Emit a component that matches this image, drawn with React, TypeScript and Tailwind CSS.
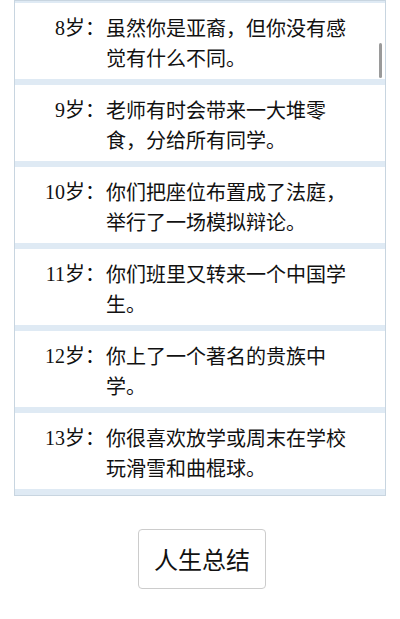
import React from 'react';

interface Entry {
  age: number;
  text: string;
}

const entries: Entry[] = [
  { age: 8, text: '虽然你是亚裔，但你没有感觉有什么不同。' },
  { age: 9, text: '老师有时会带来一大堆零食，分给所有同学。' },
  { age: 10, text: '你们把座位布置成了法庭，举行了一场模拟辩论。' },
  { age: 11, text: '你们班里又转来一个中国学生。' },
  { age: 12, text: '你上了一个著名的贵族中学。' },
  { age: 13, text: '你很喜欢放学或周末在学校玩滑雪和曲棍球。' },
];

const sans = "font-['Noto_Sans_CJK_SC','Noto_Sans',sans-serif]";

export default function App() {
  return (
    <div className="w-[400px] h-[619px] bg-white flex flex-col items-center overflow-hidden">
      <div className="relative w-[372px] h-[496px] border border-[#c8d5e0] bg-[#dfeaf4] overflow-hidden flex flex-col">
        <div className="h-[2px] shrink-0" />
        {entries.map((e) => (
          <div key={e.age} className="shrink-0 mb-[6px]">
            <div className="flex bg-white pt-[10px] pb-[6px] text-[20px] leading-[30px] text-[#111]">
              <div className="w-[90px] shrink-0 text-right font-['Liberation_Serif','Noto_Sans_CJK_SC',serif]">
                {e.age}岁：
              </div>
              <div className={`w-[252px] pl-px ${sans}`}>{e.text}</div>
            </div>
          </div>
        ))}
        {/* overlay scrollbar thumb */}
        <div className="absolute right-[3px] top-[42px] w-[3px] h-[35px] rounded-full bg-[#9a9a9a]" />
      </div>

      <button
        className={`mt-[33px] ml-[4px] w-[128px] h-[60px] rounded-[4px] border border-[#cccccc] bg-white text-[24px] text-[#111] ${sans}`}
      >
        人生总结
      </button>
    </div>
  );
}
